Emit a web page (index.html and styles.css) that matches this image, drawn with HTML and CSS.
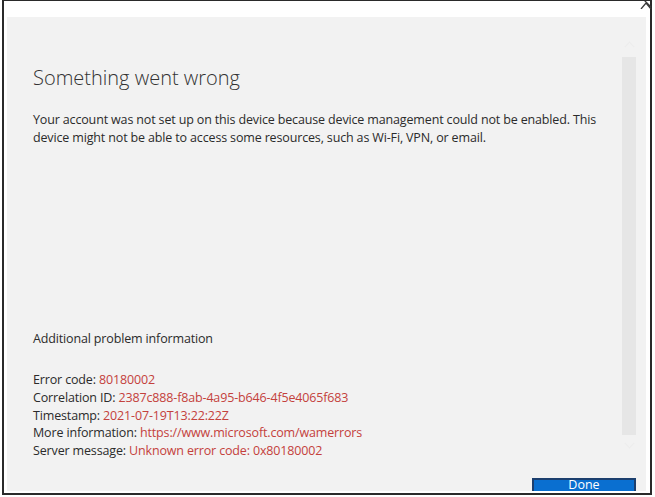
FILE: index.html
```html
<!DOCTYPE html>
<html lang="en">
<head>
  <meta charset="UTF-8" />
  <title>Something went wrong</title>
  <link rel="stylesheet" href="styles.css">
</head>
<body>
  <div class="window">
    <svg class="close" width="12" height="8" viewBox="0 0 12 8">
      <path d="M1 8 L6 2 L11 8 M1 -4 L11 6" stroke="#3a3a3a" stroke-width="1.3" fill="none"/>
    </svg>
    <div class="panel">
      <div class="content">
        <h1>Something went wrong</h1>
        <p class="message">Your account was not set up on this device because device management could not be enabled. This device might not be able to access some resources, such as Wi-Fi, VPN, or email.</p>

        <div class="details">
          <div class="details-title">Additional problem information</div>
          <ul class="info">
            <li>Error code: <span class="val">80180002</span></li>
            <li>Correlation ID: <span class="val">2387c888-f8ab-4a95-b646-4f5e4065f683</span></li>
            <li>Timestamp: <span class="val">2021-07-19T13:22:22Z</span></li>
            <li>More information: <span class="val">https://www.microsoft.com/wamerrors</span></li>
            <li>Server message: <span class="val">Unknown error code: 0x80180002</span></li>
          </ul>
        </div>
      </div>

      <div class="scroll">
        <span class="arrow up"></span>
        <div class="track"></div>
        <span class="arrow down"></span>
      </div>

      <div class="footer">
        <button class="done-btn">Done</button>
      </div>
    </div>
  </div>
</body>
</html>
```

FILE: styles.css
```css
body {
  margin: 0;
  background: #fff;
  font-family: 'Open Sans', 'Noto Sans', sans-serif;
  color: #2b2b2b;
}

.window {
  position: relative;
  box-sizing: border-box;
  width: 650px;
  height: 495px;
  margin-left: 2px;
  border: 2px solid #2a2a2a;
  border-top-width: 1px;
  padding: 16px 4px 2px 3px;
  background: #fff;
}

.close {
  position: absolute;
  top: 0;
  right: -2px;
}

.panel {
  height: 100%;
  background: #f2f2f2;
  display: grid;
  grid-template-columns: 1fr 14px;
  grid-template-rows: 1fr 31px;
  column-gap: 10px;
  padding-right: 10px;
}

.content {
  padding: 47px 0 0 26px;
  display: flex;
  flex-direction: column;
}

h1 {
  margin: 0;
  font-size: 20px;
  font-weight: 300;
  line-height: 28px;
  color: #333;
}

.message {
  margin: 19px 0 0;
  font-size: 12.5px;
  line-height: 18px;
  letter-spacing: -0.15px;
}

.details {
  margin-top: auto;
  padding-bottom: 0;
  font-size: 12.5px;
  line-height: 17.8px;
  letter-spacing: -0.15px;
}

.details-title {
  margin-bottom: 23px;
}

.info {
  list-style: none;
  margin: 0;
  padding: 0;
}

.val {
  color: #c4413c;
}

.scroll {
  display: flex;
  flex-direction: column;
  align-items: center;
  padding-top: 26px;
}

.track {
  width: 14px;
  height: 378px;
  background: #e6e6e6;
}

.arrow {
  width: 6px;
  height: 6px;
  border-left: 1px solid #ececec;
  border-top: 1px solid #ececec;
}

.arrow.up {
  transform: rotate(45deg);
  margin-bottom: 7px;
}

.arrow.down {
  transform: rotate(225deg);
  margin-top: 5px;
}

.footer {
  grid-column: 1 / 3;
  display: flex;
  justify-content: flex-end;
  align-items: flex-start;
  padding-top: 18px;
}

.done-btn {
  width: 104px;
  height: 13px;
  border: 2px solid #1c3f6e;
  border-bottom: 0;
  background: #0a6fd0;
  color: #fff;
  font-family: inherit;
  font-size: 12.5px;
  padding: 0;
  line-height: 10px;
  display: flex;
  justify-content: center;
  align-items: flex-start;
}
```
